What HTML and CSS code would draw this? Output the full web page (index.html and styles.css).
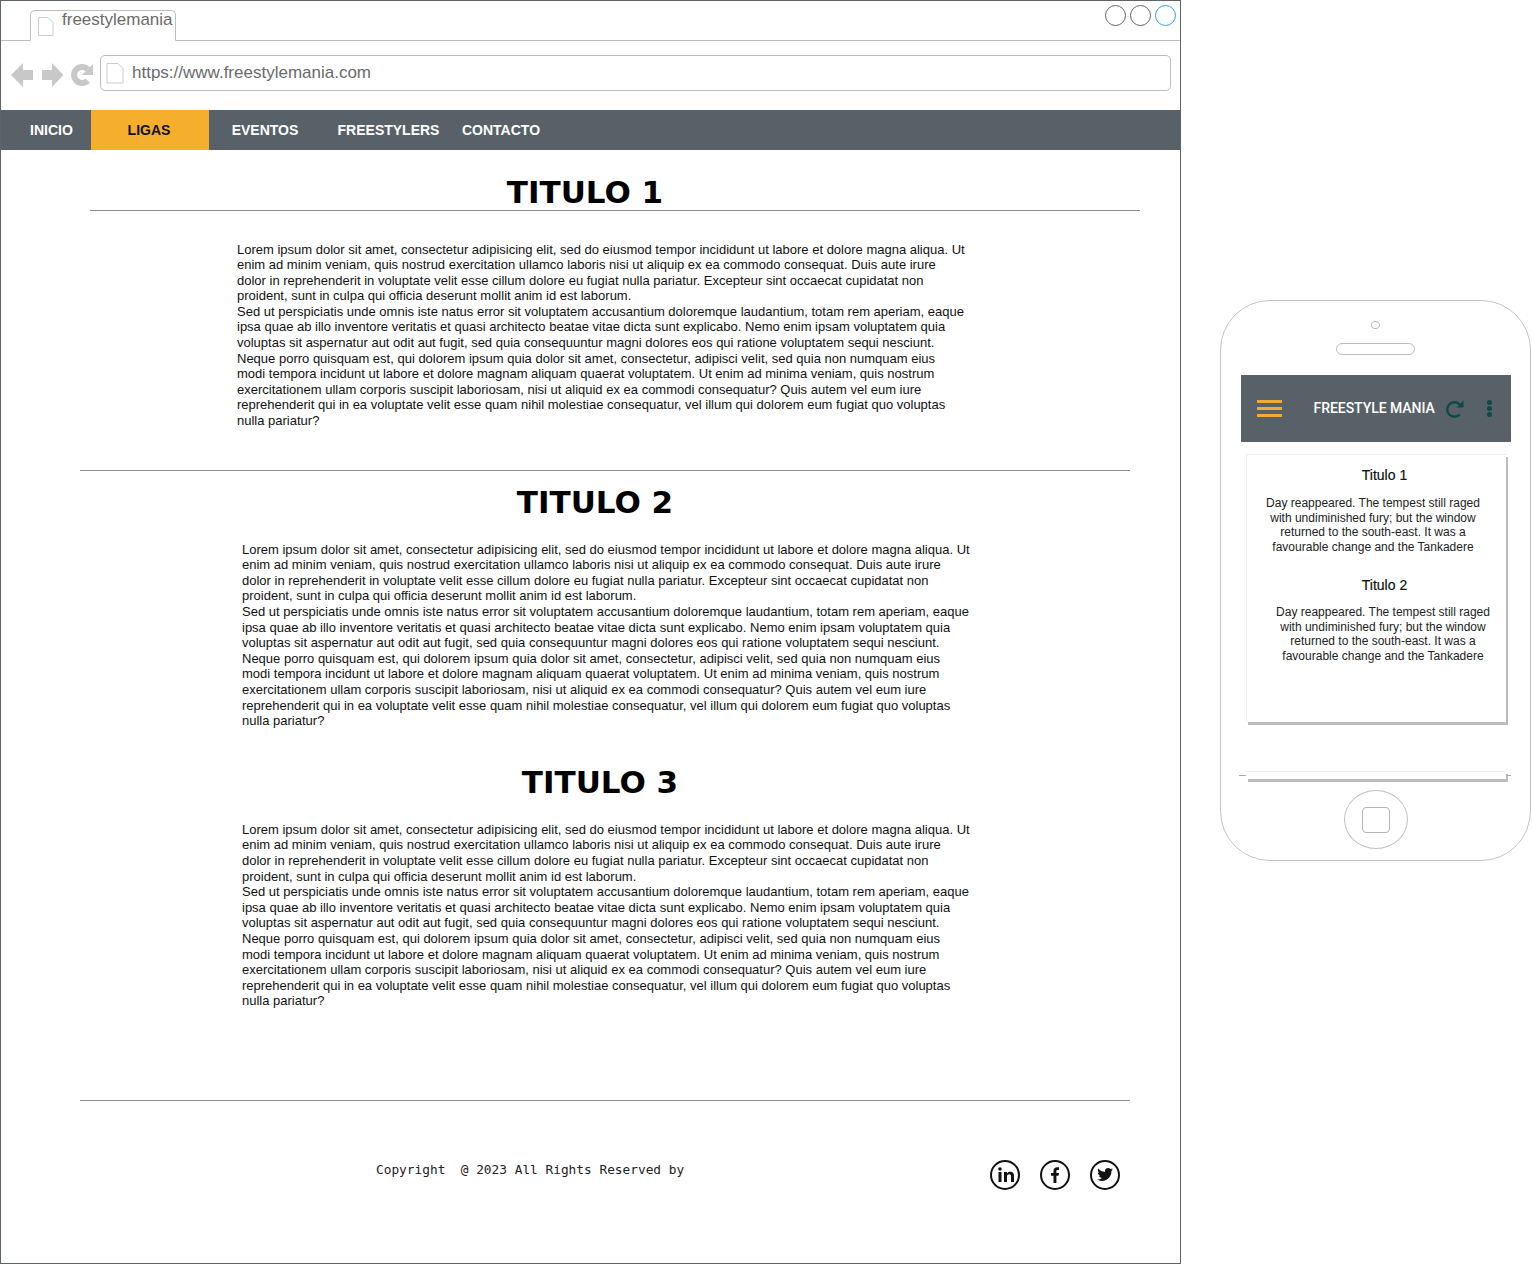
FILE: index.html
```html
<!DOCTYPE html>
<html lang="en">
<head>
  <meta charset="UTF-8" />
  <meta name="viewport" content="width=device-width, initial-scale=1.0" />
  <title>freestylemania</title>
  <link rel="stylesheet" href="styles.css">
</head>
<body>
  <div class="browser">
    <div class="tab-bar">
      <div class="tab">
        <svg class="page-icon" width="17" height="19" viewBox="0 0 17 19"><path d="M1.500 .5H11L16 5.500V18.500H1.500Z" fill="#fff" stroke="#ccc"/></svg>
        <span>freestylemania</span>
      </div>
      <div class="win-buttons">
        <span class="win-btn"></span>
        <span class="win-btn"></span>
        <span class="win-btn active"></span>
      </div>
    </div>

    <div class="address-row">
      <svg class="nav-icons" width="84" height="26" viewBox="0 0 84 26">
        <path d="M0 13 12 1V8H22V18H12V25Z" fill="#c8c8c8"/>
        <path d="M31 8H41V1L52.500 13 41 25V18H31Z" fill="#c8c8c8"/>
        <path d="M76.700 18.700A8 8 0 1 1 76.700 7.300" fill="none" stroke="#c8c8c8" stroke-width="6"/>
        <path d="M82 2V13H71Z" fill="#c8c8c8"/>
      </svg>
      <div class="address">
        <svg width="18" height="21" viewBox="0 0 18 21"><path d="M1 .5H12L17 5.500V20H1Z" fill="#fff" stroke="#ccc"/></svg>
        <span>https://www.freestylemania.com</span>
      </div>
    </div>

    <nav class="menu">
      <a class="inicio">INICIO</a>
      <a class="ligas">LIGAS</a>
      <a class="eventos">EVENTOS</a>
      <a class="freestylers">FREESTYLERS</a>
      <a class="contacto">CONTACTO</a>
    </nav>

    <main>
      <section class="block first">
        <h1>TITULO 1</h1>
        <hr>
        <p>Lorem ipsum dolor sit amet, consectetur adipisicing elit, sed do eiusmod tempor incididunt ut labore et dolore magna aliqua. Ut enim ad minim veniam, quis nostrud exercitation ullamco laboris nisi ut aliquip ex ea commodo consequat. Duis aute irure dolor in reprehenderit in voluptate velit esse cillum dolore eu fugiat nulla pariatur. Excepteur sint occaecat cupidatat non proident, sunt in culpa qui officia deserunt mollit anim id est laborum.<br>Sed ut perspiciatis unde omnis iste natus error sit voluptatem accusantium doloremque laudantium, totam rem aperiam, eaque ipsa quae ab illo inventore veritatis et quasi architecto beatae vitae dicta sunt explicabo. Nemo enim ipsam voluptatem quia voluptas sit aspernatur aut odit aut fugit, sed quia consequuntur magni dolores eos qui ratione voluptatem sequi nesciunt.<br>Neque porro quisquam est, qui dolorem ipsum quia dolor sit amet, consectetur, adipisci velit, sed quia non numquam eius modi tempora incidunt ut labore et dolore magnam aliquam quaerat voluptatem. Ut enim ad minima veniam, quis nostrum exercitationem ullam corporis suscipit laboriosam, nisi ut aliquid ex ea commodi consequatur? Quis autem vel eum iure reprehenderit qui in ea voluptate velit esse quam nihil molestiae consequatur, vel illum qui dolorem eum fugiat quo voluptas nulla pariatur?</p>
      </section>

      <hr class="wide">

      <section class="block second">
        <h1>TITULO 2</h1>
        <p>Lorem ipsum dolor sit amet, consectetur adipisicing elit, sed do eiusmod tempor incididunt ut labore et dolore magna aliqua. Ut enim ad minim veniam, quis nostrud exercitation ullamco laboris nisi ut aliquip ex ea commodo consequat. Duis aute irure dolor in reprehenderit in voluptate velit esse cillum dolore eu fugiat nulla pariatur. Excepteur sint occaecat cupidatat non proident, sunt in culpa qui officia deserunt mollit anim id est laborum.<br>Sed ut perspiciatis unde omnis iste natus error sit voluptatem accusantium doloremque laudantium, totam rem aperiam, eaque ipsa quae ab illo inventore veritatis et quasi architecto beatae vitae dicta sunt explicabo. Nemo enim ipsam voluptatem quia voluptas sit aspernatur aut odit aut fugit, sed quia consequuntur magni dolores eos qui ratione voluptatem sequi nesciunt.<br>Neque porro quisquam est, qui dolorem ipsum quia dolor sit amet, consectetur, adipisci velit, sed quia non numquam eius modi tempora incidunt ut labore et dolore magnam aliquam quaerat voluptatem. Ut enim ad minima veniam, quis nostrum exercitationem ullam corporis suscipit laboriosam, nisi ut aliquid ex ea commodi consequatur? Quis autem vel eum iure reprehenderit qui in ea voluptate velit esse quam nihil molestiae consequatur, vel illum qui dolorem eum fugiat quo voluptas nulla pariatur?</p>
      </section>

      <section class="block third">
        <h1>TITULO 3</h1>
        <p>Lorem ipsum dolor sit amet, consectetur adipisicing elit, sed do eiusmod tempor incididunt ut labore et dolore magna aliqua. Ut enim ad minim veniam, quis nostrud exercitation ullamco laboris nisi ut aliquip ex ea commodo consequat. Duis aute irure dolor in reprehenderit in voluptate velit esse cillum dolore eu fugiat nulla pariatur. Excepteur sint occaecat cupidatat non proident, sunt in culpa qui officia deserunt mollit anim id est laborum.<br>Sed ut perspiciatis unde omnis iste natus error sit voluptatem accusantium doloremque laudantium, totam rem aperiam, eaque ipsa quae ab illo inventore veritatis et quasi architecto beatae vitae dicta sunt explicabo. Nemo enim ipsam voluptatem quia voluptas sit aspernatur aut odit aut fugit, sed quia consequuntur magni dolores eos qui ratione voluptatem sequi nesciunt.<br>Neque porro quisquam est, qui dolorem ipsum quia dolor sit amet, consectetur, adipisci velit, sed quia non numquam eius modi tempora incidunt ut labore et dolore magnam aliquam quaerat voluptatem. Ut enim ad minima veniam, quis nostrum exercitationem ullam corporis suscipit laboriosam, nisi ut aliquid ex ea commodi consequatur? Quis autem vel eum iure reprehenderit qui in ea voluptate velit esse quam nihil molestiae consequatur, vel illum qui dolorem eum fugiat quo voluptas nulla pariatur?</p>
      </section>

      <hr class="wide bottom">

      <footer>
        <div class="copyright">Copyright &nbsp;@ 2023 All Rights Reserved by</div>
        <div class="social">
          <svg width="32" height="32" viewBox="0 0 32 32"><circle cx="16" cy="16" r="14" fill="none" stroke="#111" stroke-width="2"/><rect x="9.500" y="13" width="3" height="10" fill="#111"/><circle cx="11" cy="10" r="1.800" fill="#111"/><path d="M15 13H18V14.500C19 13 20.500 12.800 21.500 12.800 24 12.800 25 14.500 25 17V23H22V17.500C22 16 21.500 15.300 20.300 15.300 19 15.300 18 16.200 18 17.500V23H15Z" fill="#111"/></svg>
          <svg width="32" height="32" viewBox="0 0 32 32"><circle cx="16" cy="16" r="14" fill="none" stroke="#111" stroke-width="2"/><path d="M14.500 24V16.800H12V14H14.500V12C14.500 9.500 16 8.300 18 8.300H20V11H18.500C17.600 11 17.400 11.500 17.400 12.200V14H20L19.600 16.800H17.400V24Z" fill="#111"/></svg>
          <svg width="32" height="32" viewBox="0 0 32 32"><circle cx="16" cy="16" r="14" fill="none" stroke="#111" stroke-width="2"/><path d="M24 10.500C23.400 10.800 22.800 11 22.100 11 22.800 10.600 23.300 10 23.500 9.200 22.900 9.600 22.200 9.900 21.400 10 20.800 9.400 20 9 19.100 9 17.300 9 15.900 10.400 15.900 12.200 15.900 12.400 15.900 12.700 16 12.900 13.300 12.800 10.900 11.500 9.300 9.500 9 10 8.900 10.500 8.900 11.100 8.900 12.200 9.500 13.200 10.300 13.800 9.800 13.800 9.300 13.600 8.800 13.400 8.800 15 10 16.300 11.400 16.600 10.900 16.700 10.500 16.800 10 16.700 10.400 18 11.600 18.900 13 18.900 11.500 20 9.800 20.600 8 20.400 9.500 21.300 11.200 21.900 13 21.900 19.100 21.900 22.400 16.900 22.400 12.500V12.100C23 11.700 23.600 11.100 24 10.500Z" fill="#111"/></svg>
        </div>
      </footer>
    </main>
  </div>

  <div class="phone">
    <span class="camera"></span>
    <span class="speaker"></span>
    <div class="app-bar">
      <div class="hamburger"><span></span><span></span><span></span></div>
      <div class="app-title">FREESTYLE MANIA</div>
      <svg class="app-reload" width="20" height="20" viewBox="0 0 20 20"><path d="M14.660 15.660A7.300 7.300 0 1 1 14.660 5.340" fill="none" stroke="#0d4a44" stroke-width="2.400"/><path d="M18.500 1.500V8.500H11.500Z" fill="#0d4a44"/></svg>
      <div class="dots"><span></span><span></span><span></span></div>
    </div>
    <div class="card">
      <h3>Titulo 1</h3>
      <p>Day reappeared. The tempest still raged with undiminished fury; but the window returned to the south-east. It was a favourable change and the Tankadere</p>
      <h3 class="shifted">Titulo 2</h3>
      <p class="shifted-more">Day reappeared. The tempest still raged with undiminished fury; but the window returned to the south-east. It was a favourable change and the Tankadere</p>
    </div>
    <div class="card-sliver"></div>
    <div class="home-btn"><span></span></div>
  </div>
</body>
</html>
```

FILE: styles.css
```css
body {
  margin: 0;
  width: 1532px;
  height: 1264px;
  display: flex;
  align-items: flex-start;
  font-family: 'Liberation Sans', Arial, sans-serif;
  background: #fff;
  color: #111;
  overflow: hidden;
}
.browser {
  width: 1181px;
  height: 1264px;
  box-sizing: border-box;
  border: 1px solid #5f6468;
  flex-shrink: 0;
}
.tab-bar {
  height: 40px;
  box-sizing: border-box;
  border-bottom: 1px solid #bdbdbd;
  padding: 9px 4px 0 29px;
  display: flex;
  justify-content: space-between;
  align-items: flex-start;
}
.tab {
  width: 146px;
  height: 31px;
  box-sizing: border-box;
  border: 1px solid #bdbdbd;
  border-bottom: 1px solid #fff;
  border-radius: 5px 5px 0 0;
  background: #fff;
  display: flex;
  align-items: flex-start;
  padding-left: 6px;
  color: #6b6b6b;
  font-size: 17px;
  line-height: 17px;
}
.tab .page-icon {
  margin: 6px 8px 0 0;
}
.win-buttons {
  display: flex;
  gap: 4px;
  margin-top: -5px;
}
.win-btn {
  width: 19px;
  height: 19px;
  border: 1px solid #666;
  border-radius: 50%;
  display: block;
}
.win-btn.active {
  border-color: #2f9fe0;
}
.address-row {
  height: 69px;
  box-sizing: border-box;
  padding: 14px 9px 0 10px;
  display: flex;
  align-items: flex-start;
  gap: 5px;
}
.nav-icons {
  margin-top: 7px;
  flex-shrink: 0;
}
.address {
  flex: 1;
  height: 36px;
  box-sizing: border-box;
  border: 1px solid #bdbdbd;
  border-radius: 5px;
  display: flex;
  align-items: center;
  gap: 8px;
  padding: 0 0 0 5px;
  color: #6b6b6b;
  font-size: 17px;
}
.menu {
  height: 40px;
  background: #596168;
  display: flex;
  align-items: center;
  font-size: 14px;
  font-weight: bold;
  color: #fff;
}
.menu a {
  display: block;
  line-height: 40px;
  text-align: center;
  box-sizing: border-box;
}
.menu .inicio {
  width: 90px;
  padding-left: 11px;
}
.menu .ligas {
  width: 118px;
  padding-right: 2px;
  background: #f6ae2d;
  color: #111;
}
.menu .eventos {
  width: 112px;
}
.menu .freestylers {
  width: 135px;
}
.menu .contacto {
  padding-left: 6px;
}
.block h1 {
  margin: 0;
  font-family: 'DejaVu Sans', Verdana, sans-serif;
  font-size: 31px;
  font-weight: bold;
  line-height: 35px;
  text-align: center;
  color: #000;
}
.block p {
  margin: 0;
  width: 729px;
  font-size: 13px;
  line-height: 15.6px;
  color: #111;
}
hr {
  margin: 0;
  border: 0;
  height: 1px;
  background: #8c8c8c;
}
.first {
  padding: 25px 0 0 89px;
  width: 1050px;
}
.first h1 {
  width: 990px;
}
.first p {
  margin: 30.5px 0 0 147px;
}
.wide {
  width: 1050px;
  margin: 41.5px 0 0 79px;
}
.second {
  padding: 14px 0 0 79px;
}
.second h1 {
  width: 1030px;
}
.second p {
  margin: 21.5px 0 0 162px;
}
.third {
  padding: 36.5px 0 0 89px;
}
.third h1 {
  width: 1020px;
}
.third p {
  margin: 21.5px 0 0 152px;
}
.wide.bottom {
  margin-top: 91px;
}
footer {
  display: flex;
  justify-content: space-between;
  align-items: flex-start;
  padding: 58px 59px 0 375px;
}
.copyright {
  font-family: 'DejaVu Sans Mono', 'Liberation Mono', monospace;
  font-size: 12.800px;
  line-height: 24px;
  margin-top: -1px;
  color: #222;
}
.social {
  display: flex;
  gap: 18px;
}
.phone {
  width: 311px;
  height: 561px;
  box-sizing: border-box;
  flex-shrink: 0;
  margin: 300px 0 0 39px;
  border: 1px solid #c4c4c4;
  border-radius: 50px;
  display: flex;
  flex-direction: column;
  align-items: center;
  padding-top: 20px;
}
.camera {
  width: 7px;
  height: 6px;
  border: 1px solid #b5b5b5;
  border-radius: 50%;
  display: block;
}
.speaker {
  width: 77px;
  height: 10px;
  border: 1px solid #bdbdbd;
  border-radius: 6px;
  margin-top: 14px;
  display: block;
}
.app-bar {
  width: 270px;
  height: 67px;
  margin-top: 20px;
  background: #596168;
  display: flex;
  align-items: center;
  color: #fff;
  box-sizing: border-box;
  padding-left: 16px;
}
.hamburger {
  width: 25px;
  margin-right: 32px;
}
.hamburger span {
  display: block;
  height: 3px;
  background: #f0aa35;
  margin: 4px 0;
}
.app-title {
  width: 131px;
  margin-top: -1px;
  font-family: Roboto, 'Liberation Sans', sans-serif;
  font-size: 14px;
  font-weight: 500;
  letter-spacing: -0.05px;
  white-space: nowrap;
}
.app-reload {
  margin-right: 22px;
}
.dots span {
  display: block;
  width: 5px;
  height: 5px;
  border-radius: 50%;
  background: #0d4a44;
  margin: 1px 0;
}
.card {
  width: 260px;
  height: 268px;
  box-sizing: border-box;
  margin-top: 12px;
  border-top: 1px solid #eee;
  border-left: 1px solid #eee;
  box-shadow: 2px 3px 0 #bdbdbd;
  text-align: center;
  font-size: 12px;
  line-height: 14.500px;
  padding-top: 12px;
  color: #222;
}
.card h3 {
  margin: 0;
  padding-left: 17px;
  font-size: 14px;
  font-weight: normal;
  line-height: 16px;
  color: #111;
  -webkit-text-stroke: 0.2px #111;
}
.card p {
  margin: 13px 21px 0 15px;
}
.card h3.shifted {
  margin-top: 23px;
}
.card p.shifted-more {
  margin: 12px 11px 0 25px;
}
.card-sliver {
  position: relative;
  width: 260px;
  height: 8px;
  margin-top: 49px;
  border-top: 1px solid #f2f2f2;
  box-sizing: border-box;
  box-shadow: 2px 3px 0 #bdbdbd;
}
.card-sliver::before,
.card-sliver::after {
  content: "";
  position: absolute;
  top: 3px;
  height: 1px;
  background: #aaa;
}
.card-sliver::before {
  left: -7px;
  width: 7px;
}
.card-sliver::after {
  right: -5px;
  width: 5px;
}
.home-btn {
  width: 62px;
  height: 57px;
  margin-top: 11px;
  border: 1px solid #c0c0c0;
  border-radius: 50%;
  display: flex;
  align-items: center;
  justify-content: center;
}
.home-btn span {
  display: block;
  width: 26px;
  height: 24px;
  border: 1px solid #b5b5b5;
  border-radius: 4px;
}
```
